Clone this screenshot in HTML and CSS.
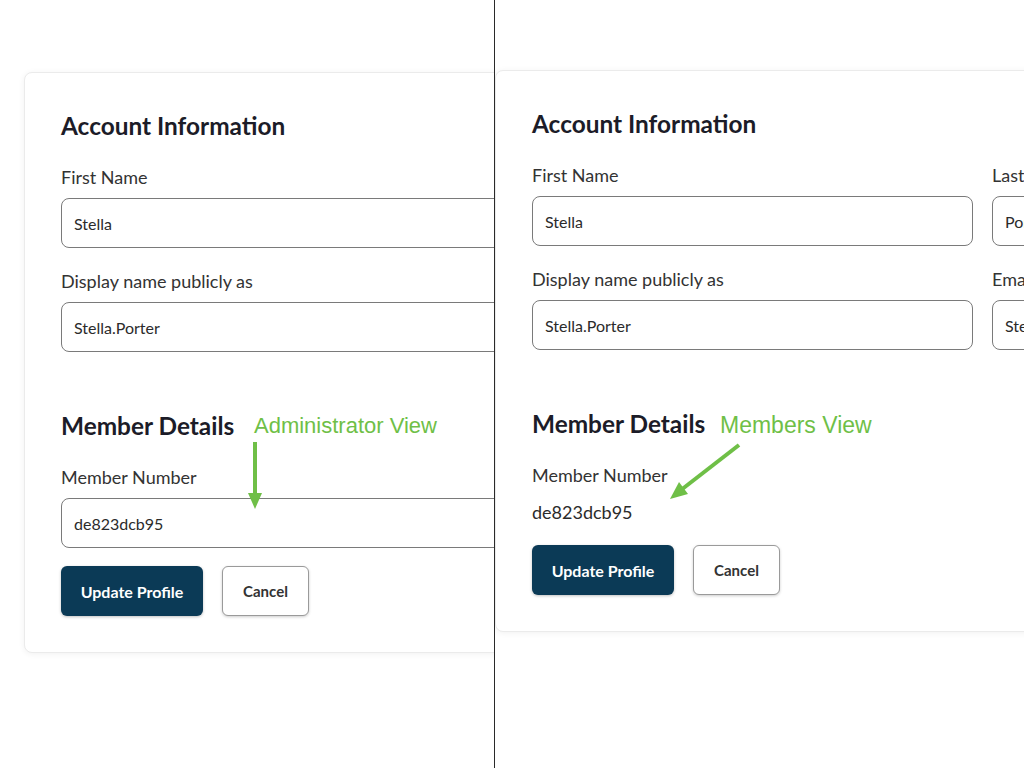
FILE: index.html
```html
<!DOCTYPE html>
<html>
  <head>
    <title>Member Profile Views</title>
    <link rel="stylesheet" href="styles.css">
  </head>
  <body>
    <div class="compare">
      <!-- Administrator view -->
      <div class="pane pane-admin">
        <div class="card">
          <h2>Account Information</h2>
          <div class="fields">
            <div class="field">
              <label for="a-first">First Name</label>
              <input type="text" id="a-first" value="Stella" />
            </div>
            <div class="field">
              <label for="a-last">Last Name</label>
              <input type="text" id="a-last" value="Porter" />
            </div>
            <div class="field">
              <label for="a-display">Display name publicly as</label>
              <input type="text" id="a-display" value="Stella.Porter" />
            </div>
            <div class="field">
              <label for="a-email">Email</label>
              <input type="text" id="a-email" value="Stella.Porter@example.com" />
            </div>
          </div>
          <h2 class="section">Member Details</h2>
          <div class="fields">
            <div class="field">
              <label for="a-number">Member Number</label>
              <input type="text" id="a-number" value="de823dcb95" />
            </div>
          </div>
          <div class="actions">
            <button class="btn btn-primary">Update Profile</button>
            <button class="btn btn-cancel">Cancel</button>
          </div>
        </div>
        <span class="note note-admin">Administrator View</span>
        <svg class="arrows" width="494" height="768">
          <line x1="255" y1="442" x2="255" y2="495" stroke="#6fbf47" stroke-width="4" />
          <polygon points="248,493 262,493 255,509" fill="#6fbf47" />
        </svg>
      </div>

      <!-- Members view -->
      <div class="pane pane-member">
        <div class="card">
          <h2>Account Information</h2>
          <div class="fields">
            <div class="field">
              <label for="m-first">First Name</label>
              <input type="text" id="m-first" value="Stella" />
            </div>
            <div class="field">
              <label for="m-last">Last Name</label>
              <input type="text" id="m-last" value="Porter" />
            </div>
            <div class="field">
              <label for="m-display">Display name publicly as</label>
              <input type="text" id="m-display" value="Stella.Porter" />
            </div>
            <div class="field">
              <label for="m-email">Email</label>
              <input type="text" id="m-email" value="Stella.Porter@example.com" />
            </div>
          </div>
          <h2 class="section">Member Details</h2>
          <div class="field">
            <label>Member Number</label>
            <div class="value">de823dcb95</div>
          </div>
          <div class="actions actions-member">
            <button class="btn btn-primary">Update Profile</button>
            <button class="btn btn-cancel">Cancel</button>
          </div>
        </div>
        <span class="note note-member">Members View</span>
        <svg class="arrows" width="528" height="768">
          <line x1="244" y1="445" x2="186" y2="490" stroke="#6fbf47" stroke-width="4" />
          <polygon points="175,499 193,494 184,482" fill="#6fbf47" />
        </svg>
      </div>
    </div>
  </body>
</html>
```

FILE: styles.css
```css
body {
  margin: 0;
  font-family: Lato, "Open Sans", sans-serif;
  background-color: #fff;
  color: #333;
}

.compare {
  display: flex;
  height: 768px;
}
.pane {
  position: relative;
  overflow: hidden;
}
.pane-admin {
  width: 494px;
  border-right: 1px solid #2a2a2a;
}
.pane-member {
  flex: 1;
}

.card {
  width: 901px;
  padding: 38px 36px 36px 36px;
  background-color: #fff;
  border: 1px solid #ebebeb;
  border-radius: 8px;
  box-shadow: 0 1px 6px rgba(0, 0, 0, 0.06);
}
.pane-admin .card {
  margin: 72px 0 0 24px;
}
.pane-member .card {
  margin: 70px 0 0 0;
}

h2 {
  margin: 0 0 26px 0;
  font-size: 24.4px;
  line-height: 29px;
  font-weight: 700;
  color: #1c1c28;
}
h2.section {
  margin-top: 59px;
}

.fields {
  display: grid;
  grid-template-columns: 441px 441px;
  column-gap: 19px;
  row-gap: 22px;
}
label {
  display: block;
  margin-bottom: 10px;
  font-size: 18px;
  line-height: 22px;
  color: #333;
}
input[type="text"] {
  box-sizing: border-box;
  width: 100%;
  height: 50px;
  padding: 0 12px;
  font-family: Lato, "Open Sans", sans-serif;
  font-size: 16px;
  color: #2b2b2b;
  border: 1px solid #7a7a7a;
  border-radius: 8px;
  background-color: #fff;
}
.value {
  margin-top: 15px;
  font-size: 18px;
  line-height: 22px;
  color: #2b2b2b;
}

.actions {
  display: flex;
  gap: 19px;
  margin-top: 18px;
}
.actions-member {
  margin-top: 22px;
}
.btn {
  box-sizing: border-box;
  height: 50px;
  font-family: Lato, "Open Sans", sans-serif;
  font-size: 15px;
  font-weight: 700;
  border-radius: 6px;
  cursor: pointer;
}
.btn-primary {
  width: 142px;
  font-size: 16px;
  background-color: #0b3a56;
  color: #fff;
  border: none;
  box-shadow: 0 1px 3px rgba(0, 0, 0, 0.25);
}
.btn-cancel {
  width: 87px;
  background-color: #fff;
  color: #333;
  border: 1px solid #9a9a9a;
  box-shadow: 0 1px 3px rgba(0, 0, 0, 0.2);
}

.note {
  position: absolute;
  font-family: "Liberation Sans", Arial, sans-serif;
  line-height: 1;
  color: #6fbf47;
  white-space: nowrap;
}
.note-admin {
  left: 254px;
  top: 415px;
  font-size: 22px;
}
.note-member {
  left: 225px;
  top: 414px;
  font-size: 23px;
}
.arrows {
  position: absolute;
  left: 0;
  top: 0;
  pointer-events: none;
}
```
